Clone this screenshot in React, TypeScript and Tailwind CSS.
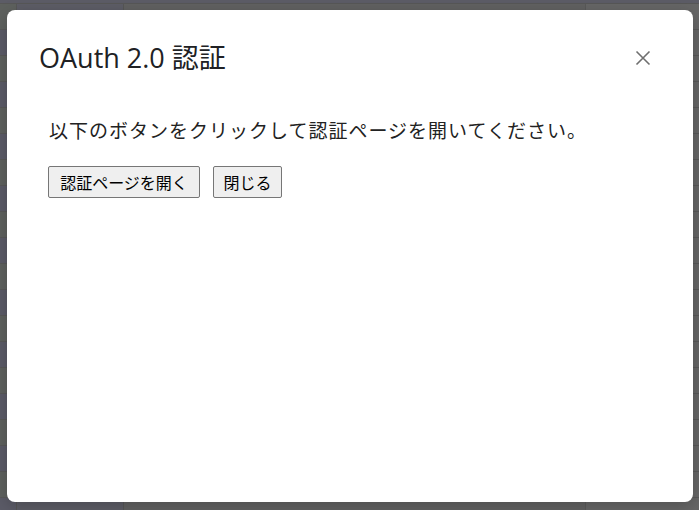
const rows = Array.from({ length: 20 }, (_, i) => i)

export default function App() {
  return (
    <div className="relative h-[510px] w-[699px] overflow-hidden bg-[#616161]">
      {/* spreadsheet behind the modal */}
      <div className="flex flex-col">
        <div className="h-[4px] border-b border-[#575757] bg-[#5c5c66]" />
        {rows.map(i => (
          <div key={i} className="flex h-[26px] border-b border-[#585858]">
            <div className={i % 2 ? 'w-[16px] bg-[#5b5b67]' : 'w-[16px] bg-[#5e615e]'} />
            <div className="w-[107px] border-l border-[#565656] bg-[#5d5d66]" />
            <div className="flex-1 border-l border-[#565656] bg-[#616161]" />
            <div className="w-[114px] border-l border-[#595959] bg-[#666666]" />
          </div>
        ))}
      </div>

      <div className="absolute left-[7px] top-[10px] h-[492px] w-[686px] rounded-[8px] bg-white shadow-[0_4px_16px_rgba(0,0,0,0.2)]">
        <div className="flex items-center justify-between pl-[32px] pr-[42px] pt-[32px]">
          <h1 className="h-[32px] font-['Open_Sans','Noto_Sans_CJK_JP',sans-serif] text-[27px] leading-[32px] font-normal text-[#202124]">
            OAuth 2.0 認証
          </h1>
          <button className="flex h-[16px] w-[16px] items-center justify-center text-[#6f6f6f]">
            <svg width="16" height="16" viewBox="0 0 16 16" fill="none" stroke="currentColor" strokeWidth="1.6">
              <path d="M1.5 1.5 14.5 14.5M14.5 1.5 1.5 14.5" />
            </svg>
          </button>
        </div>

        <div className="pl-[41px] pt-[42px] font-['Noto_Sans_CJK_JP',sans-serif] text-[#222222]">
          <p className="ml-[1px] text-[19px] leading-[28px] tracking-[1px]">
            以下のボタンをクリックして認証ページを開いてください。
          </p>
          <div className="mt-[22px] flex gap-[13px]">
            <button className="h-[32px] w-[152px] rounded-[2px] border border-[#767676] bg-[#efefef] text-[16px] leading-[20px] text-black">
              認証ページを開く
            </button>
            <button className="h-[32px] w-[69px] rounded-[2px] border border-[#767676] bg-[#efefef] text-[16px] leading-[20px] text-black">
              閉じる
            </button>
          </div>
        </div>
      </div>
    </div>
  )
}
